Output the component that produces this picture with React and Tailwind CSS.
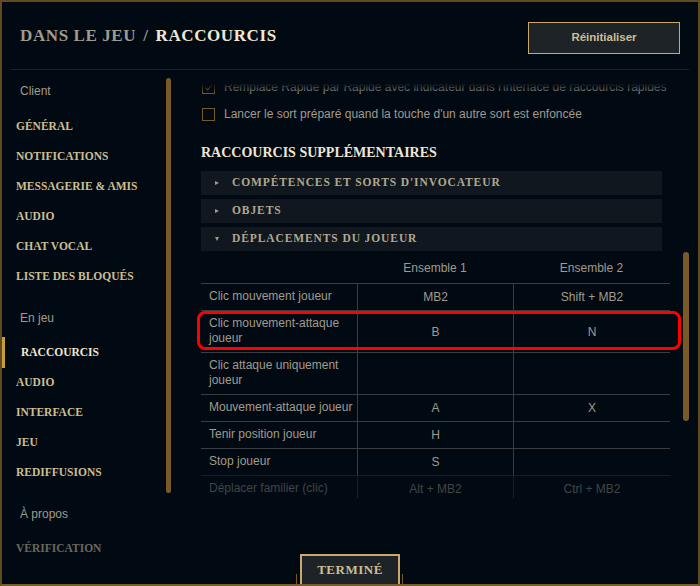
import React from 'react';

const serif = "font-['Liberation_Serif',serif] font-bold";
const sans = "font-['Liberation_Sans',Arial,sans-serif]";

const clientItems = ['GÉNÉRAL', 'NOTIFICATIONS', 'MESSAGERIE & AMIS', 'AUDIO', 'CHAT VOCAL', 'LISTE DES BLOQUÉS'];
const gameItems = ['RACCOURCIS', 'AUDIO', 'INTERFACE', 'JEU', 'REDIFFUSIONS'];

const rows = [
  { name: ['Clic mouvement joueur'], a: 'MB2', b: 'Shift + MB2' },
  { name: ['Clic mouvement-attaque', 'joueur'], a: 'B', b: 'N', marked: true },
  { name: ['Clic attaque uniquement', 'joueur'], a: '', b: '' },
  { name: ['Mouvement-attaque joueur'], a: 'A', b: 'X' },
  { name: ['Tenir position joueur'], a: 'H', b: '' },
  { name: ['Stop joueur'], a: 'S', b: '' },
  { name: ['Déplacer familier (clic)'], a: 'Alt + MB2', b: 'Ctrl + MB2', faded: true },
];

const SideLabel = ({ children, className = '' }) => (
  <div className={`h-[22px] flex items-center pl-[18px] text-[12px] text-[#a09b8c] ${sans} ${className}`}>
    {children}
  </div>
);

const SideItem = ({ label, active, dim }) => (
  <div className="relative h-[30px] flex items-center pt-[2px]">
    {active && <div className="absolute left-0 top-0 h-[31px] w-[3px] bg-[#c89b3c]" />}
    <span
      className={`${serif} text-[11.5px] ${active ? 'pl-[19px] text-[#f0e6d2]' : 'pl-[14px]'} ${
        dim ? 'text-[#6b675c]' : active ? '' : 'text-[#cdbe91]'
      }`}
    >
      {label}
    </span>
  </div>
);

const Checkbox = ({ checked }) => (
  <div className="w-[13px] h-[13px] border border-[#785a28] flex items-center justify-center shrink-0">
    {checked && (
      <svg width="9" height="9" viewBox="0 0 9 9">
        <path d="M1.5 4.5 L3.8 7 L7.8 1.8" fill="none" stroke="#785a28" strokeWidth="1.3" />
      </svg>
    )}
  </div>
);

const Accordion = ({ label, open }) => (
  <div className="h-[24px] w-[461px] bg-[#10171e] flex items-center pl-[14px] mb-[4px] last:mb-0">
    {open ? (
      <div className="w-0 h-0 border-x-[2.5px] border-x-transparent border-t-[4px] border-t-[#a09b8c]" />
    ) : (
      <div className="w-0 h-0 border-y-[2.5px] border-y-transparent border-l-[4px] border-l-[#a09b8c]" />
    )}
    <span className={`${serif} ml-[13px] text-[11.5px] tracking-[0.9px] text-[#b0a890]`}>{label}</span>
  </div>
);

export default function App() {
  return (
    <div className="relative w-[700px] h-[586px] bg-[#010a13] border-2 border-[#5f4b1e] border-b-[#7a5c29] flex flex-col overflow-hidden">
      {/* header */}
      <div className="h-[68px] shrink-0 mx-[9px] border-b border-[#1e2328] flex items-center justify-between px-[9px]">
        <div className={`${serif} text-[17px] tracking-[0.6px]`}>
          <span className="text-[#a09b8c]">DANS LE JEU</span>
          <span className="text-[#a09b8c] mx-[7px]">/</span>
          <span className="text-[#f0e6d2]">RACCOURCIS</span>
        </div>
        <button
          className={`mt-[4px] w-[152px] h-[32px] border border-[#c8aa6e] bg-[#1e2328] text-[11.5px] font-bold text-[#cdbe91] ${sans}`}
        >
          Réinitialiser
        </button>
      </div>

      <div className="flex flex-1 min-h-0">
        {/* sidebar */}
        <div className="relative w-[169px] shrink-0 pt-[10px]">
          <SideLabel>Client</SideLabel>
          <div className="mt-[9px]">
            {clientItems.map((it) => (
              <SideItem key={it} label={it} />
            ))}
          </div>
          <SideLabel className="mt-[16px]">En jeu</SideLabel>
          <div className="mt-[8px]">
            {gameItems.map((it, i) => (
              <SideItem key={it + i} label={it} active={i === 0} />
            ))}
          </div>
          <SideLabel className="mt-[16px]">À propos</SideLabel>
          <div className="mt-[8px]">
            <SideItem label="VÉRIFICATION" dim />
          </div>
          <div className="absolute right-0 top-[8px] w-[5px] h-[415px] rounded-[3px] bg-[#785a28]" />
        </div>

        {/* main */}
        <div className="relative flex-1">
          <div className="relative h-[428px] overflow-hidden pl-[30px] pt-[7px]">
            <div className={`h-[20px] flex items-center gap-[9px] pl-[1px] ${sans} text-[12px] text-[#a09b8c]`}>
              <Checkbox checked />
              <span className="whitespace-nowrap">
                Remplace Rapide par Rapide avec indicateur dans l'interface de raccourcis rapides
              </span>
            </div>
            <div className={`mt-[7px] h-[20px] flex items-center gap-[9px] pl-[1px] ${sans} text-[12px] text-[#a09b8c]`}>
              <Checkbox />
              <span className="whitespace-nowrap">Lancer le sort préparé quand la touche d'un autre sort est enfoncée</span>
            </div>

            <div className={`mt-[18px] h-[20px] flex items-center ${serif} text-[14px] text-[#f0e6d2]`}>
              RACCOURCIS SUPPLÉMENTAIRES
            </div>

            <div className="mt-[9px]">
              <Accordion label="COMPÉTENCES ET SORTS D'INVOCATEUR" />
              <Accordion label="OBJETS" />
              <Accordion label="DÉPLACEMENTS DU JOUEUR" open />
            </div>

            <div className={`w-[469px] ${sans} text-[12px] text-[#a09b8c]`}>
              <div className="grid grid-cols-[156px_156px_157px] h-[32px] items-center pt-[2px]">
                <div />
                <div className="text-center">Ensemble 1</div>
                <div className="text-center">Ensemble 2</div>
              </div>
              {rows.map((r, i) => (
                <div
                  key={i}
                  className={`relative grid grid-cols-[156px_156px_157px] border-t border-[#3a3c3f] ${
                    r.faded ? 'opacity-40' : ''
                  }`}
                >
                  <div className="pl-[8px] pt-[5px] pb-[6px] leading-[15px] whitespace-nowrap">
                    {r.name.map((n, j) => (
                      <div key={j}>{n}</div>
                    ))}
                  </div>
                  <div className="border-l border-[#3a3c3f] flex items-center justify-center">{r.a}</div>
                  <div className="border-l border-[#3a3c3f] flex items-center justify-center">{r.b}</div>
                  {r.marked && (
                    <div className="absolute left-[-4px] right-[-11px] top-0 bottom-[2px] border-[3px] border-[#ff0000] rounded-[8px]" />
                  )}
                </div>
              ))}
            </div>

            {/* top scroll fade */}
            <div className="absolute left-0 right-0 top-0 h-[24px] bg-linear-to-b from-[#010a13] from-55% to-[#010a13]/0" />
          </div>
          <div className="absolute right-[9px] top-[182px] w-[6px] h-[169px] rounded-[3px] bg-[#785a28]" />
        </div>
      </div>

      {/* footer button */}
      <div className="absolute bottom-[-2px] left-[294px] w-[1px] h-[12px] bg-[#785a28]" />
      <div className="absolute bottom-[-2px] left-[400px] w-[1px] h-[12px] bg-[#785a28]" />
      <button
        className={`absolute bottom-[-2px] left-[298px] w-[100px] h-[32px] border-2 border-[#c8aa6e] border-b-[#8a6d34] bg-[#1e2328] ${serif} text-[13px] tracking-[0.5px] text-[#cdbe91]`}
      >
        TERMINÉ
      </button>
    </div>
  );
}
